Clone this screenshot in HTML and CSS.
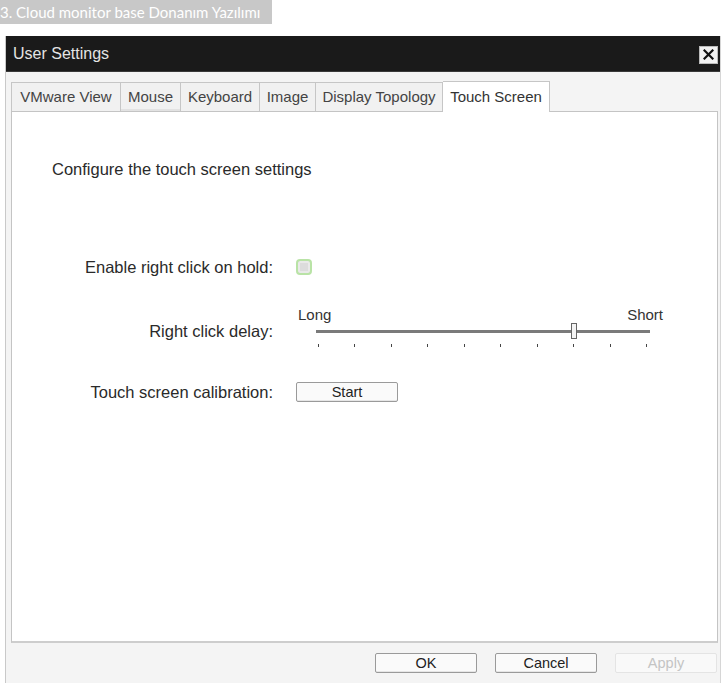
FILE: index.html
```html
<!DOCTYPE html>
<html>
<head>
<meta charset="utf-8">
<link rel="stylesheet" href="styles.css">
</head>
<body>
<div class="caption">3. Cloud monitor base Donanım Yazılımı</div>
<div class="dialog">
  <div class="titlebar">
    <span class="title">User Settings</span>
    <span class="close">
      <svg width="11" height="11" viewBox="0 0 11 11"><path d="M1.5 1.5L9.5 9.5M9.5 1.5L1.5 9.5" stroke="#111" stroke-width="2.2" stroke-linecap="square"/></svg>
    </span>
  </div>
  <div class="body">
    <div class="tabs">
      <div class="tab t1">VMware View</div>
      <div class="tab t2 hover">Mouse</div>
      <div class="tab t3">Keyboard</div>
      <div class="tab t4">Image</div>
      <div class="tab t5">Display Topology</div>
      <div class="tab t6 active">Touch Screen</div>
    </div>
    <div class="panel">
      <div class="heading">Configure the touch screen settings</div>
      <div class="form">
        <div class="row row1">
          <div class="label">Enable right click on hold:</div>
          <div class="ctrl"><span class="checkbox"></span></div>
        </div>
        <div class="row row2">
          <div class="label">Right click delay:</div>
          <div class="ctrl">
            <div class="slider">
              <div class="slider-labels"><span>Long</span><span>Short</span></div>
              <div class="track"><span class="thumb"></span></div>
              <div class="ticks">
                <i></i><i></i><i></i><i></i><i></i><i></i><i></i><i></i><i></i><i></i>
              </div>
            </div>
          </div>
        </div>
        <div class="row row3">
          <div class="label">Touch screen calibration:</div>
          <div class="ctrl"><button class="btn start">Start</button></div>
        </div>
      </div>
    </div>
    <div class="footer">
      <button class="btn">OK</button>
      <button class="btn">Cancel</button>
      <button class="btn disabled">Apply</button>
    </div>
  </div>
</div>
</body>
</html>
```

FILE: styles.css
```css
* { box-sizing: border-box; }
html, body { margin: 0; padding: 0; background: #ffffff; }
body { width: 724px; height: 683px; overflow: hidden; font-family: "Liberation Sans", Arial, sans-serif; }

.caption {
  width: 272px;
  height: 24px;
  background: #c8c8c8;
  color: #ffffff;
  font-family: "Lato", "Open Sans", sans-serif;
  font-size: 15px;
  line-height: 24px;
  padding-left: 0;
  white-space: nowrap;
  overflow: hidden;
}

.dialog {
  margin-top: 12px;
  margin-left: 5px;
  width: 716px;
  border-left: 1px solid #c9c9c9;
  border-right: 1px solid #d6d6d6;
}

.titlebar {
  height: 36px;
  background: #1a1a1a;
  display: flex;
  align-items: center;
  padding: 0 2px 0 7px;
  border-bottom: 1px solid #3a3a3a;
}
.title { color: #e4e4e4; font-size: 16px; }
.close {
  margin-left: auto;
  margin-top: 2px;
  width: 19px;
  height: 18px;
  background: #f2f2f2;
  border: 1px solid #bbbbbb;
  display: flex;
  align-items: center;
  justify-content: center;
}

.body {
  background: #f4f4f4;
  height: 611px;
  padding: 9px 0 0 5px;
}

.tabs { display: flex; height: 30px; align-items: flex-end; }
.tab {
  height: 29px;
  border: 1px solid #c6c6c6;
  border-left: none;
  border-bottom: none;
  background: #f1f1f1;
  color: #444;
  font-size: 15px;
  line-height: 28px;
  text-align: center;
  white-space: nowrap;
}
.tab.t1 { width: 110px; border-left: 1px solid #c6c6c6; }
.tab.t2 { width: 60px; }
.tab.t3 { width: 79px; }
.tab.t4 { width: 56px; }
.tab.t5 { width: 127px; }
.tab.t6 { width: 107px; }
.tab.hover { box-shadow: inset 0 -2px 0 #e2e2e2; }
.tab.active {
  height: 31px;
  background: #ffffff;
  color: #333;
  line-height: 30px;
  position: relative;
  top: 1px;
}

.panel {
  width: 707px;
  height: 532px;
  background: #ffffff;
  border: 1px solid #c4c4c4;
  border-bottom: 2px solid #cdcdcd;
  padding-left: 40px;
  padding-top: 47px;
  color: #2a2a2a;
  font-size: 16.5px;
}
.heading { line-height: 20px; }

.form {
  margin-top: 78px;
  margin-left: -40px;
  display: flex;
  flex-direction: column;
}
.row { display: flex; align-items: flex-start; }
.label { width: 261px; text-align: right; line-height: 20px; white-space: nowrap; }
.ctrl { margin-left: 23px; display: flex; align-items: center; height: 20px; }
.row1 { height: 20px; }
.row2 { margin-top: 30px; height: 41px; }
.row2 .label { margin-top: 14px; }
.row2 .ctrl { height: auto; }
.row3 { margin-top: 34px; height: 20px; }

.checkbox {
  width: 16px;
  height: 16px;
  border: 2px solid #b9e3a6;
  border-radius: 4px;
  background: #dcdcdc;
  box-shadow: inset 0 0 0 2px #e9e9e9;
  display: block;
}

.slider { width: 365px; margin-left: 2px; }
.slider-labels {
  display: flex;
  justify-content: space-between;
  font-size: 15px;
  line-height: 16px;
  color: #333;
}
.track {
  position: relative;
  margin-left: 18px;
  width: 334px;
  height: 3px;
  margin-top: 7px;
  background: #7a7a7a;
}
.thumb {
  position: absolute;
  left: 255px;
  top: -7px;
  width: 6px;
  height: 16px;
  background: #f4f4f4;
  border: 1px solid #666;
}
.ticks {
  display: flex;
  justify-content: space-between;
  width: 329px;
  margin-left: 20px;
  margin-top: 11px;
}
.ticks i { display: block; width: 1px; height: 3px; background: #444; }

.btn {
  font-family: "Liberation Sans", Arial, sans-serif;
  font-size: 14.5px;
  color: #222;
  background: #fafafa;
  border: 1px solid #9a9a9a;
  border-radius: 2px;
  width: 102px;
  height: 20px;
  padding: 0;
  line-height: 18px;
  box-shadow: inset 0 -1px 0 #e6e6e6;
}
.footer {
  display: flex;
  justify-content: flex-end;
  gap: 18px;
  padding-right: 3px;
  margin-top: 10px;
}
.btn.disabled { color: #c4c4c4; border-color: #e4e4e4; background: #f9f9f9; box-shadow: none; }
```
